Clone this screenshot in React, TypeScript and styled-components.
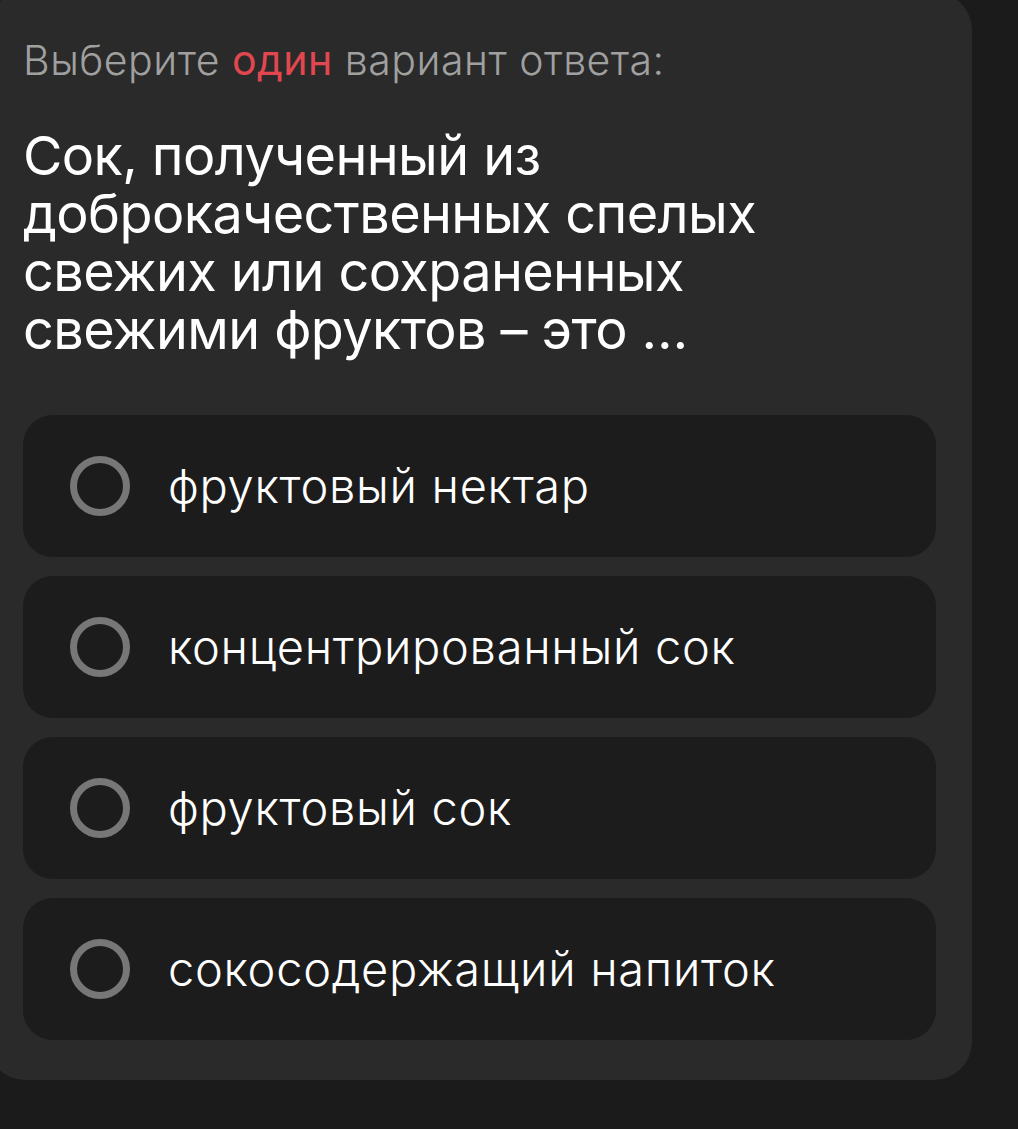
import React from "react";
import styled, { createGlobalStyle } from "styled-components";

const Global = createGlobalStyle`
  html, body { margin: 0; padding: 0; background: #1b1b1b; }
  body { font-family: Inter, "Noto Sans", sans-serif; overflow: hidden; }
`;

const Page = styled.div`
  min-height: 1129px;
  background: #1b1b1b;
`;

const Card = styled.section`
  box-sizing: border-box;
  margin: -8px 0 0 -13px;
  width: 985px;
  background: #2a2a2a;
  border-radius: 38px;
  padding: 43px 36px 40px 36px;
  display: flex;
  flex-direction: column;
`;

const Hint = styled.div`
  font-family: Inter, sans-serif;
  font-weight: 300;
  font-size: 41px;
  line-height: 50px;
  color: #a0a0a0;
  letter-spacing: 0.5px;
`;

const Accent = styled.span`
  color: #e2474f;
  font-weight: 400;
`;

const Question = styled.h1`
  margin: 42px 0 0 0;
  font-family: Inter, sans-serif;
  font-weight: 400;
  font-size: 54px;
  line-height: 58px;
  letter-spacing: -0.6px;
  color: #ffffff;
`;

const Options = styled.div`
  margin-top: 56px;
  display: flex;
  flex-direction: column;
  gap: 19px;
`;

const Option = styled.div`
  height: 142px;
  box-sizing: border-box;
  background: #1c1c1c;
  border-radius: 30px;
  display: flex;
  align-items: center;
  padding-left: 47px;
  gap: 38px;
`;

const Radio = styled.span`
  box-sizing: border-box;
  width: 60px;
  height: 60px;
  border-radius: 50%;
  border: 7px solid #777777;
  flex: none;
`;

const Label = styled.span`
  font-family: Inter, sans-serif;
  font-weight: 300;
  font-size: 47px;
  line-height: 56px;
  letter-spacing: 0.7px;
  color: #ffffff;
`;

const options = [
  "фруктовый нектар",
  "концентрированный сок",
  "фруктовый сок",
  "сокосодержащий напиток",
];

export default function App() {
  return (
    <Page>
      <Global />
      <Card>
        <Hint>
          Выберите <Accent>один</Accent> вариант ответа:
        </Hint>
        <Question>
          Сок, полученный из
          <br />
          доброкачественных спелых
          <br />
          свежих или сохраненных
          <br />
          свежими фруктов – это …
        </Question>
        <Options>
          {options.map((o) => (
            <Option key={o}>
              <Radio />
              <Label>{o}</Label>
            </Option>
          ))}
        </Options>
      </Card>
    </Page>
  );
}
